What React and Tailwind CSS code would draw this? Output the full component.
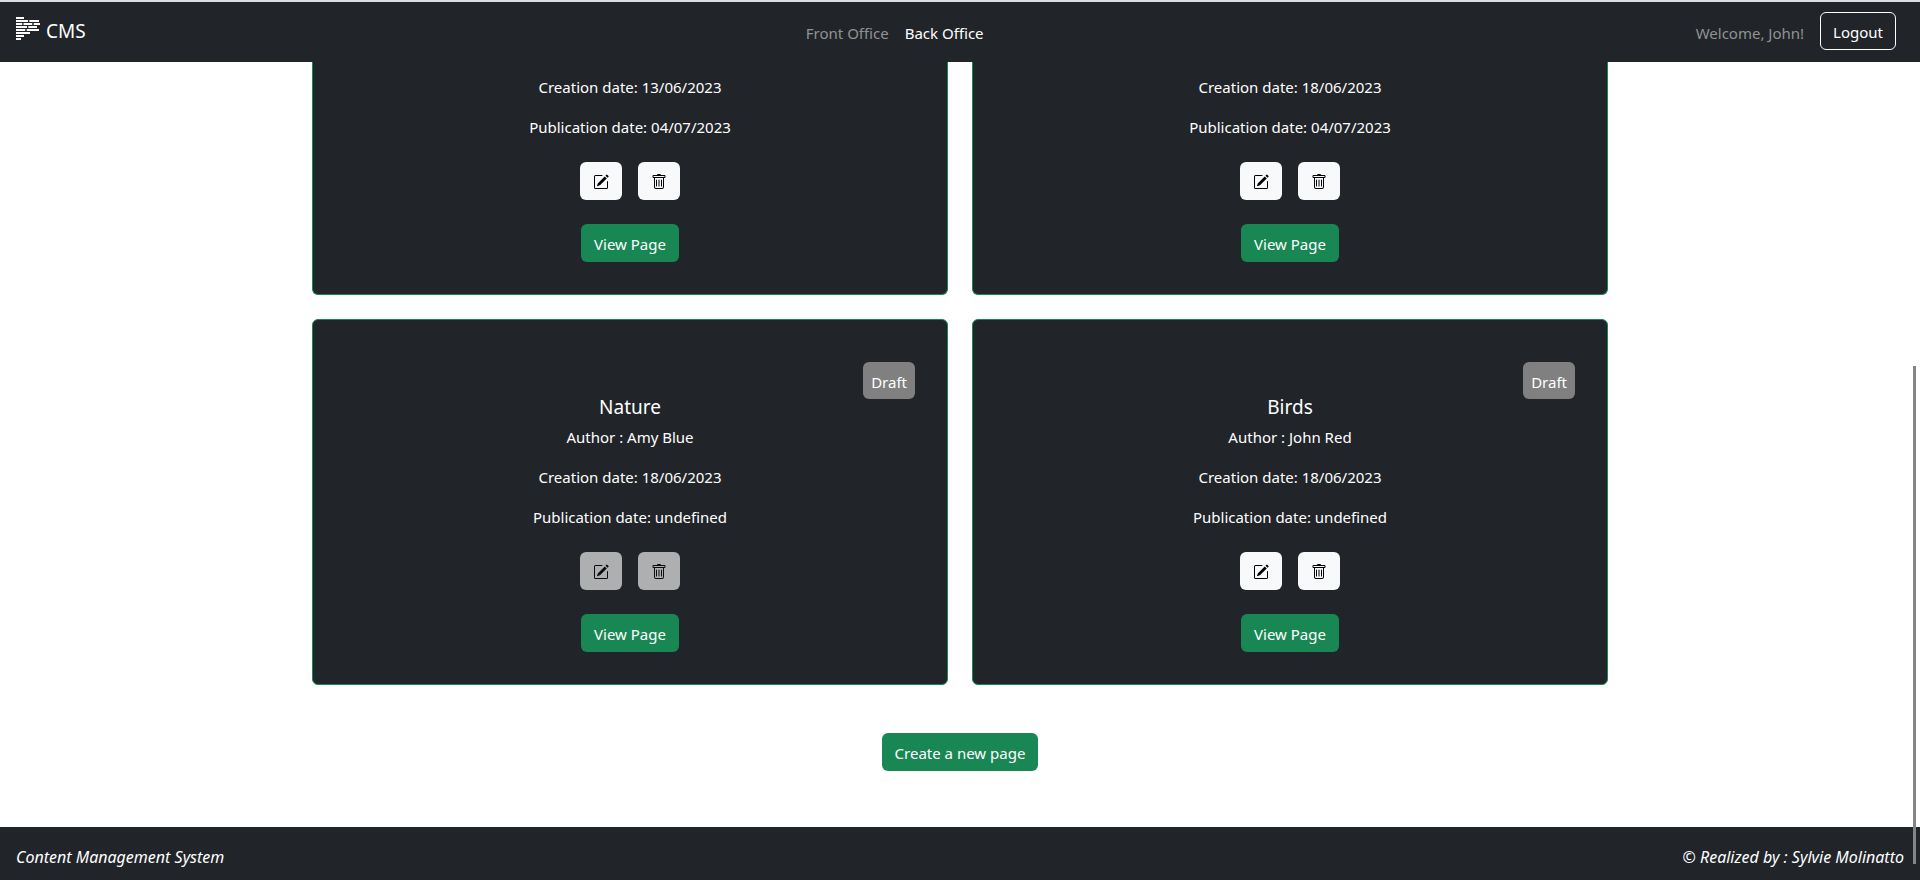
import { BsPencilSquare, BsTrash } from "react-icons/bs";

const publishedPages = [
  { id: 1, creationDate: "13/06/2023", publicationDate: "04/07/2023", editable: true },
  { id: 2, creationDate: "18/06/2023", publicationDate: "04/07/2023", editable: true },
];

const draftPages = [
  { id: 3, title: "Nature", author: "Amy Blue", creationDate: "18/06/2023", publicationDate: "undefined", editable: false },
  { id: 4, title: "Birds", author: "John Red", creationDate: "18/06/2023", publicationDate: "undefined", editable: true },
];

function Logo() {
  return (
    <svg viewBox="0 0 24 24" className="size-6" stroke="currentColor" strokeWidth="1.8" fill="none" aria-hidden="true">
      <path d="M0 1H8M0 4H12M13.3 4H23M0 7H6.3M7.5 7H16.3M17.7 7H24M0 10H11M12.3 10H21M0 13H9.3M10.7 13H23M0 16H14M0 19H8M0 22H5" />
    </svg>
  );
}

function CardActions({ editable }) {
  const iconButton =
    "flex h-[38px] w-[42px] items-center justify-center rounded-md bg-[#f8f9fa] pt-[2px] text-black disabled:opacity-65";
  return (
    <div className="mt-[23px] flex flex-col items-center gap-6">
      <div className="flex gap-4">
        <button type="button" aria-label="Edit page" disabled={!editable} className={iconButton}>
          <BsPencilSquare className="size-4" />
        </button>
        <button type="button" aria-label="Delete page" disabled={!editable} className={iconButton}>
          <BsTrash className="size-4" />
        </button>
      </div>
      <a href="#view" className="rounded-md bg-[#198754] px-[13px] pt-2 pb-[6px]">
        View Page
      </a>
    </div>
  );
}

function PageDates({ page }) {
  return (
    <div className="flex flex-col items-center gap-4">
      <p>Creation date: {page.creationDate}</p>
      <p>Publication date: {page.publicationDate}</p>
    </div>
  );
}

function PublishedCard({ page }) {
  return (
    <article className="flex flex-1 flex-col items-center rounded-b-md border border-t-0 border-[#198754] bg-[#212529] px-8 pt-[13px] pb-8 text-white">
      <PageDates page={page} />
      <CardActions editable={page.editable} />
    </article>
  );
}

function DraftCard({ page }) {
  return (
    <article className="relative flex flex-1 flex-col items-center rounded-md border border-[#198754] bg-[#212529] px-8 pt-[75px] pb-8 text-white">
      <span className="absolute top-[42px] right-8 rounded-md bg-[#808080] px-2 pt-2 pb-[5px]">Draft</span>
      <h2 className="mb-[6px] text-[19px] leading-6">{page.title}</h2>
      <p className="mb-4">Author : {page.author}</p>
      <PageDates page={page} />
      <CardActions editable={page.editable} />
    </article>
  );
}

export default function App() {
  return (
    <div className="flex min-h-screen flex-col bg-white font-['Noto_Sans',sans-serif] text-[15px] leading-6">
      <header className="flex h-[62px] items-center justify-between border-t-2 border-[#dcdee0] bg-[#212529] pr-6 pb-[2px] pl-4 text-white">
        <a href="#home" className="flex items-center gap-[6px] pr-2 pb-1 text-[19px]">
          <Logo />
          <span className="pt-1">CMS</span>
        </a>
        <nav className="flex gap-4 pt-1">
          <a href="#front" className="text-[#909294]">Front Office</a>
          <a href="#back">Back Office</a>
        </nav>
        <div className="flex items-center gap-4">
          <span className="pt-1 text-[#909294]">Welcome, John!</span>
          <button type="button" className="rounded-md border border-white px-3 pt-[7px] pb-[5px]">Logout</button>
        </div>
      </header>

      <main className="flex flex-1 flex-col items-center">
        <div className="flex w-full max-w-[1320px] flex-col gap-6 px-3">
          <section className="flex gap-6">
            {publishedPages.map((page) => (
              <PublishedCard key={page.id} page={page} />
            ))}
          </section>
          <section className="flex gap-6">
            {draftPages.map((page) => (
              <DraftCard key={page.id} page={page} />
            ))}
          </section>
        </div>
        <button type="button" className="mt-12 rounded-md bg-[#198754] px-[13px] pt-2 pb-[6px] text-white">
          Create a new page
        </button>
      </main>

      <footer className="flex h-[53px] items-center justify-between bg-[#212529] px-4 pt-[6px] text-[16px] text-white italic">
        <p>Content Management System</p>
        <p>© Realized by : Sylvie Molinatto</p>
      </footer>

      <div className="fixed top-[366px] right-1 bottom-4 w-[3px] bg-[#858585]" />
    </div>
  );
}
